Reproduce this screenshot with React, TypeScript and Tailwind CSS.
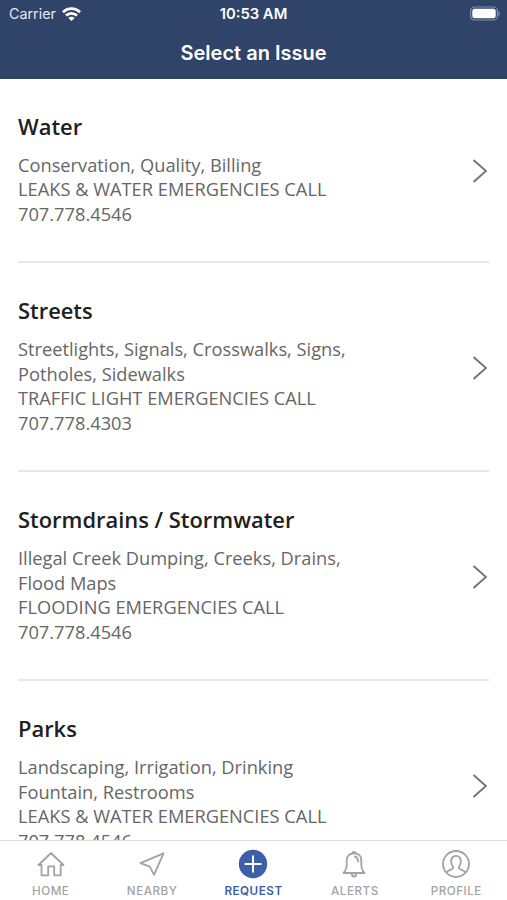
import type { ReactNode } from 'react';

type Issue = {
  title: string;
  lines: string[];
};

const issues: Issue[] = [
  {
    title: 'Water',
    lines: ['Conservation, Quality, Billing', 'LEAKS & WATER EMERGENCIES CALL', '707.778.4546'],
  },
  {
    title: 'Streets',
    lines: [
      'Streetlights, Signals, Crosswalks, Signs,',
      'Potholes, Sidewalks',
      'TRAFFIC LIGHT EMERGENCIES CALL',
      '707.778.4303',
    ],
  },
  {
    title: 'Stormdrains / Stormwater',
    lines: [
      'Illegal Creek Dumping, Creeks, Drains,',
      'Flood Maps',
      'FLOODING EMERGENCIES CALL',
      '707.778.4546',
    ],
  },
  {
    title: 'Parks',
    lines: [
      'Landscaping, Irrigation, Drinking',
      'Fountain, Restrooms',
      'LEAKS & WATER EMERGENCIES CALL',
      '707.778.4546',
    ],
  },
];

export default function App() {
  return (
    <div className="flex h-[900px] w-[507px] flex-col overflow-hidden bg-white">
      <Header />
      <main className="min-h-0 flex-1 overflow-hidden px-[18px]">
        {issues.map((issue) => (
          <IssueRow key={issue.title} issue={issue} />
        ))}
      </main>
      <TabBar />
    </div>
  );
}

function Header() {
  return (
    <header className="h-[79px] shrink-0 bg-[#2f4468] font-['Inter',sans-serif] text-white">
      {/* Status bar */}
      <div className="grid h-[27px] grid-cols-3 items-center px-[7px]">
        <div className="flex items-center gap-[6px] pl-[2px]">
          <span className="text-[14.3px] text-[#e3e8f0]">Carrier</span>
          <WifiIcon />
        </div>
        <span className="pt-px text-center text-[14.8px] font-semibold">10:53 AM</span>
        <div className="flex justify-end">
          <BatteryIcon />
        </div>
      </div>
      <h1 className="pt-[10.5px] text-center text-[20px] font-semibold leading-[30px]">Select an Issue</h1>
    </header>
  );
}

function IssueRow({ issue }: { issue: Issue }) {
  return (
    <section className="flex items-center justify-between border-b-2 border-[#e8e8e8] pb-[34.5px] pt-[33px] font-['Open_Sans',sans-serif]">
      <div>
        <h2 className="text-[21.9px] font-semibold leading-[30px] text-[#202020]">{issue.title}</h2>
        <div className="pt-[10.5px] text-[18.25px] leading-[24.75px] text-[#666]">
          {issue.lines.map((line) => (
            <p key={line} className="whitespace-nowrap">{line}</p>
          ))}
        </div>
      </div>
      <svg className="mr-[2px] mt-[4px] h-6 w-[15px]" viewBox="0 0 15 24" fill="none" stroke="#707070" strokeWidth="1.8">
        <path d="M1.5 1 L14 12 L1.5 23" />
      </svg>
    </section>
  );
}

function TabBar() {
  return (
    <nav className="grid h-[60px] shrink-0 grid-cols-5 border-t border-[#dedede] bg-white font-['Inter',sans-serif]">
      <Tab label="HOME">
        <path d="M2.5 15 L15 3 L27.5 15 H24.7 V25.3 H18.2 V16.3 H12.2 V25.3 H5.5 V15 Z" />
      </Tab>
      <Tab label="NEARBY">
        <path d="M3.5 13.2 L26.5 3.3 L17 24.8 L12.8 16.7 Z" />
      </Tab>
      <Tab label="REQUEST" active>
        <circle cx="15" cy="14" r="14.2" fill="#3e5dab" stroke="none" />
        <path d="M15 5.5 V22.5 M6.5 14 H23.5" stroke="#fff" strokeWidth="2" />
      </Tab>
      <Tab label="ALERTS">
        <path d="M12 3.2 a2.2 2.2 0 0 1 4 0 M3.5 23 C6 20.5 6.7 18 6.7 14 V10.5 C6.7 6 9.5 3.3 14 3.3 S21.3 6 21.3 10.5 V14 C21.3 18 22 20.5 24.5 23 Z M11.7 23.5 a2.3 3 0 0 0 4.6 0" />
        <path d="M14.3 6.5 C17 6.8 18.2 9 18.2 12.3" />
      </Tab>
      <Tab label="PROFILE">
        <circle cx="15" cy="14" r="13" />
        <path d="M5.5 22.5 C6.5 19.5 12.3 20 12.3 17.8 C12.3 16.5 10.2 15.5 10.2 11.5 C10.2 8 12 5.8 15 5.8 S19.8 8 19.8 11.5 C19.8 15.5 17.7 16.5 17.7 17.8 C17.7 20 23.5 19.5 24.5 22.5" />
      </Tab>
    </nav>
  );
}

function Tab({ label, active, children }: { label: string; active?: boolean; children: ReactNode }) {
  return (
    <button className="flex flex-col items-center pt-[9px]">
      <svg
        className="h-7 w-[30px] overflow-visible"
        viewBox="0 0 30 28"
        fill="none"
        stroke="#a3a3a3"
        strokeWidth="1.8"
        strokeLinejoin="round"
      >
        {children}
      </svg>
      <span
        className={`mt-[5px] text-[11.7px] leading-[16px] tracking-[0.5px] ${
          active ? 'font-semibold text-[#3e5dab]' : 'font-medium text-[#a3a3a3]'
        }`}
      >
        {label}
      </span>
    </button>
  );
}

function WifiIcon() {
  return (
    <svg className="h-[14px] w-[19px]" viewBox="0 0 19 14" fill="none" stroke="#fff" strokeWidth="2.8">
      <path d="M1 5.2 C5.8 0.4 13.2 0.4 18 5.2" />
      <path d="M4 8.6 C7.2 5.5 11.8 5.5 15 8.6" />
      <path d="M9.5 14 L6.3 10.9 C8.3 9.2 10.7 9.2 12.7 10.9 Z" fill="#fff" stroke="none" />
    </svg>
  );
}

function BatteryIcon() {
  return (
    <svg className="h-[15px] w-[30px]" viewBox="0 0 30 15">
      <rect x="0.6" y="1" width="26.8" height="13" rx="3.8" fill="none" stroke="#8290aa" strokeWidth="1.2" />
      <rect x="2.3" y="2.8" width="23.4" height="9.4" rx="2.2" fill="#fff" />
      <path d="M28.4 5 C30.2 5.8 30.2 9.2 28.4 10 Z" fill="#8290aa" />
    </svg>
  );
}
